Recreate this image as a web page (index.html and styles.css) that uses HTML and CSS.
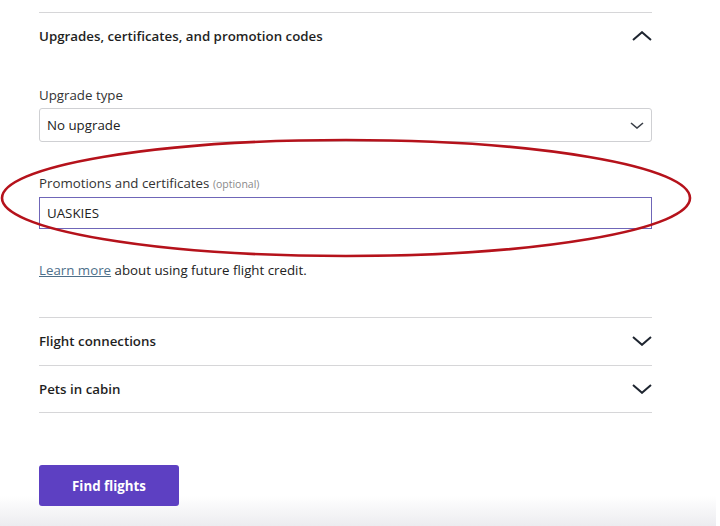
FILE: index.html
```html
<!DOCTYPE html>
<html>
	<head>
		<title>Find flights</title>
		<link rel="stylesheet" href="styles.css">
	</head>

	<body>
		<div class="fondo"></div>
		<div class="pagina">
			<div class="sezione aperta">
				<div class="intestazione">
					<span>Upgrades, certificates, and promotion codes</span>
					<svg class="freccia" width="20" height="10" viewBox="0 0 20 10"><path d="M1 9 L10 1.2 L19 9" fill="none" stroke="#1e2530" stroke-width="2"/></svg>
				</div>
				<div class="campo">
					<label class="etichetta">Upgrade type</label>
					<div class="select">
						<span>No upgrade</span>
						<svg width="14" height="7" viewBox="0 0 14 7"><path d="M1 1 L7 6 L13 1" fill="none" stroke="#3a3f48" stroke-width="1.6"/></svg>
					</div>
				</div>
				<div class="campo promo">
					<label class="etichetta">Promotions and certificates <span class="opzionale">(optional)</span></label>
					<div class="input">UASKIES</div>
				</div>
				<p class="nota"><a href="#">Learn more</a> about using future flight credit.</p>
			</div>
			<div class="sezione">
				<div class="intestazione">
					<span>Flight connections</span>
					<svg class="freccia" width="20" height="10" viewBox="0 0 20 10"><path d="M1 1 L10 8.8 L19 1" fill="none" stroke="#1e2530" stroke-width="2"/></svg>
				</div>
			</div>
			<div class="sezione ultima">
				<div class="intestazione">
					<span>Pets in cabin</span>
					<svg class="freccia" width="20" height="10" viewBox="0 0 20 10"><path d="M1 1 L10 8.8 L19 1" fill="none" stroke="#1e2530" stroke-width="2"/></svg>
				</div>
			</div>
			<button class="pulsante">Find flights</button>
		</div>
		<svg class="cerchio" width="720" height="526" viewBox="0 0 720 526">
			<ellipse cx="346" cy="198" rx="344" ry="58" fill="none" stroke="#b5121b" stroke-width="2.6"/>
		</svg>
	</body>
</html>
```

FILE: styles.css
```css
body {
	margin: 0;
	background-color: #ffffff;
	font-family: "Open Sans", "Liberation Sans", sans-serif;
	color: #222;
	width: 720px;
	height: 526px;
	overflow: hidden;
	position: relative;
}

.pagina {
	position: relative;
	width: 613px;
	margin-left: 39px;
	padding-top: 12px;
}

.sezione {
	border-top: 1px solid #d6d6d8;
}

.ultima {
	border-bottom: 1px solid #d6d6d8;
}

.intestazione {
	height: 46.5px;
	display: flex;
	align-items: center;
	justify-content: space-between;
	font-size: 13.3px;
	font-weight: 600;
	color: #1f1f1f;
}

.aperta .intestazione {
	height: 46px;
}

.campo {
	margin-top: 26px;
}

.promo {
	margin-top: 31px;
}

.etichetta {
	display: block;
	font-size: 13.3px;
	line-height: 20px;
	color: #333;
	margin-bottom: 3px;
}

.opzionale {
	font-size: 10.5px;
	color: #8a8a8a;
}

.select {
	height: 32px;
	border: 1px solid #cfd0d3;
	border-radius: 3px;
	display: flex;
	align-items: center;
	justify-content: space-between;
	padding: 0 7px 0 7px;
	font-size: 13.3px;
	color: #222;
}

.input {
	height: 30px;
	border: 1px solid #6f66b8;
	display: flex;
	align-items: center;
	padding: 0 7px;
	font-size: 13.3px;
	color: #222;
}

.nota {
	margin: 31px 0 37px 0;
	font-size: 13.3px;
	line-height: 20px;
	color: #222;
}

.nota a {
	color: #4d6f8a;
	text-decoration: underline;
}

.pulsante {
	display: block;
	margin-top: 52px;
	width: 140px;
	height: 41px;
	background-color: #5d40c2;
	color: #ffffff;
	border: none;
	border-radius: 3px;
	font-family: "Open Sans", "Liberation Sans", sans-serif;
	font-size: 13.3px;
	font-weight: 700;
}

.fondo {
	position: absolute;
	left: 0;
	bottom: 0;
	width: 716px;
	height: 30px;
	background: linear-gradient(#ffffff, #ececf0);
}

.cerchio {
	position: absolute;
	left: 0;
	top: 0;
}
```
